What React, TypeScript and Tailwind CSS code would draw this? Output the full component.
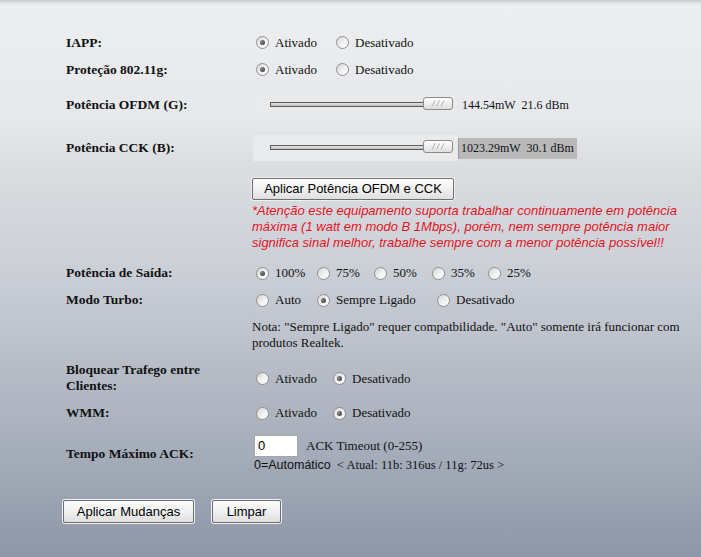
import React from "react";

const serif = { fontFamily: '"Liberation Serif", "Times New Roman", serif' };
const sans = { fontFamily: '"Liberation Sans", Arial, sans-serif' };

function Radio({ checked }: { checked?: boolean }) {
  return (
    <span className="relative inline-flex h-[13px] w-[13px] shrink-0 items-center justify-center rounded-full border border-[#8e8f8f] bg-[linear-gradient(135deg,#d6d6d6_0%,#f2f2f2_55%,#ffffff_100%)]">
      {checked && (
        <span className="h-[5px] w-[5px] rounded-full bg-[radial-gradient(circle_at_35%_35%,#8a8a8a,#2f2f2f)]" />
      )}
    </span>
  );
}

function Option({ label, checked, w }: { label: string; checked?: boolean; w?: string }) {
  return (
    <span className={`inline-flex items-center ${w ?? ""}`}>
      <Radio checked={checked} />
      <span className="ml-[6px] text-[13px] leading-[16px] text-[#111]" style={serif}>
        {label}
      </span>
    </span>
  );
}

function Label({ children }: { children: React.ReactNode }) {
  return (
    <div className="w-[186px] shrink-0 text-[13.5px] font-bold leading-[16px] text-[#111]" style={serif}>
      {children}
    </div>
  );
}

function Slider() {
  return (
    <div className="relative ml-[1px] h-[26px] w-[205px] bg-[#e9eaec]">
      <div className="absolute left-[17px] top-[10px] h-[5px] w-[156px] border border-[#5b5b5b] bg-[linear-gradient(180deg,#e6e6e6,#bdbdbd)]" />
      <div className="absolute left-[170px] top-[5px] flex h-[13px] w-[30px] items-center justify-center rounded-[3px] border border-[#8a8a8a] bg-[linear-gradient(180deg,#ffffff,#dedede)]">
        <svg width="14" height="7" viewBox="0 0 14 7">
          <path d="M1 6.5L4 0.5M5.5 6.5L8.5 0.5M10 6.5L13 0.5" stroke="#b0b0b0" strokeWidth="1" fill="none" />
        </svg>
      </div>
    </div>
  );
}

function Btn({ children, className }: { children: React.ReactNode; className?: string }) {
  return (
    <button
      className={`flex items-center justify-center rounded-[2px] border border-[#6f6f6f] bg-[linear-gradient(180deg,#fdfdfd_0%,#f1f1f1_50%,#dedede_100%)] text-[13px] text-black shadow-[0_0_0_1px_#eef0f3] ${className ?? ""}`}
      style={sans}
    >
      {children}
    </button>
  );
}

export default function App() {
  return (
    <div className="h-[557px] w-[701px] overflow-hidden bg-[linear-gradient(180deg,#c6c7ca_0px,#e2e3e5_3px,#eceef0_6px,#e6e8eb_120px,#dcdee1_160px,#c9cdd5_280px,#acb3bf_420px,#8e97a8_557px)]">
      <div className="flex flex-col pl-[66px] pt-[29px]">
        <div className="flex h-[27px] items-center">
          <Label>IAPP:</Label>
          <div className="flex items-center pl-[4px]">
            <Option label="Ativado" checked w="w-[80px]" />
            <Option label="Desativado" />
          </div>
        </div>
        <div className="flex h-[27px] items-center">
          <Label>Proteção 802.11g:</Label>
          <div className="flex items-center pl-[4px]">
            <Option label="Ativado" checked w="w-[80px]" />
            <Option label="Desativado" />
          </div>
        </div>
        <div className="flex h-[43px] items-center">
          <Label>Potência OFDM (G):</Label>
          <div className="flex items-center pt-[1px]">
            <Slider />
            <span className="ml-[4px] whitespace-pre text-[12px] text-[#111]" style={serif}>
              144.54mW  21.6 dBm
            </span>
          </div>
        </div>
        <div className="flex h-[44px] items-center">
          <Label>Potência CCK (B):</Label>
          <div className="flex items-center">
            <Slider />
            <span
              className="ml-[-1px] flex h-[21px] w-[120px] items-center whitespace-pre border-l-2 border-[#9a9a9a] bg-[#b9b9b9] pl-[2px] text-[12px] text-[#111]"
              style={serif}
            >
              1023.29mW  30.1 dBm
            </span>
          </div>
        </div>
        <div className="ml-[186px] mt-[8px] flex flex-col">
          <Btn className="h-[22px] w-[202px]">Aplicar Potência OFDM e CCK</Btn>
          <div className="mt-[3px] text-[13px] italic leading-[16px] text-[#e3141f]" style={sans}>
            *Atenção este equipamento suporta trabalhar continuamente em potência
            <br />
            máxima (1 watt em modo B 1Mbps), porém, nem sempre potência maior
            <br />
            significa sinal melhor, trabalhe sempre com a menor potência possível!!
          </div>
        </div>
        <div className="mt-[8px] flex h-[28px] items-center">
          <Label>Potência de Saída:</Label>
          <div className="flex items-center pl-[4px]">
            <Option label="100%" checked w="w-[61px]" />
            <Option label="75%" w="w-[57px]" />
            <Option label="50%" w="w-[58px]" />
            <Option label="35%" w="w-[56px]" />
            <Option label="25%" />
          </div>
        </div>
        <div className="flex h-[26px] items-center">
          <Label>Modo Turbo:</Label>
          <div className="flex items-center pl-[4px]">
            <Option label="Auto" w="w-[61px]" />
            <Option label="Sempre Ligado" checked w="w-[120px]" />
            <Option label="Desativado" />
          </div>
        </div>
        <div className="ml-[186px] mt-[6px] text-[13px] leading-[16px] text-[#111]" style={serif}>
          Nota: "Sempre Ligado" requer compatbilidade. "Auto" somente irá funcionar com
          <br />
          produtos Realtek.
        </div>
        <div className="mt-[5px] flex h-[43px] items-center">
          <Label>
            Bloquear Trafego entre
            <br />
            Clientes:
          </Label>
          <div className="flex items-center pl-[4px] pt-[2px]">
            <Option label="Ativado" w="w-[77px]" />
            <Option label="Desativado" checked />
          </div>
        </div>
        <div className="flex h-[28px] items-center">
          <Label>WMM:</Label>
          <div className="flex items-center pl-[4px]">
            <Option label="Ativado" w="w-[77px]" />
            <Option label="Desativado" checked />
          </div>
        </div>
        <div className="mt-[8px] flex items-center">
          <Label>Tempo Máximo ACK:</Label>
          <div className="flex flex-col pl-[2px]">
            <div className="flex items-center">
              <div
                className="flex h-[22px] w-[44px] items-center border border-[#a7a7a7] bg-white pl-[3px] text-[13px] text-black"
                style={sans}
              >
                0
              </div>
              <span className="ml-[8px] text-[13px] text-[#111]" style={serif}>
                ACK Timeout (0-255)
              </span>
            </div>
            <div className="whitespace-pre text-[12.5px] leading-[16px] text-[#111]">
              <span style={sans}>0=Automático</span>
              <span style={serif}>{"  < Atual: 11b: 316us / 11g: 72us >"}</span>
            </div>
          </div>
        </div>
        <div className="ml-[-3px] mt-[27px] flex items-center gap-[18px]">
          <Btn className="h-[23px] w-[131px]">Aplicar Mudanças</Btn>
          <Btn className="h-[23px] w-[69px]">Limpar</Btn>
        </div>
      </div>
    </div>
  );
}
